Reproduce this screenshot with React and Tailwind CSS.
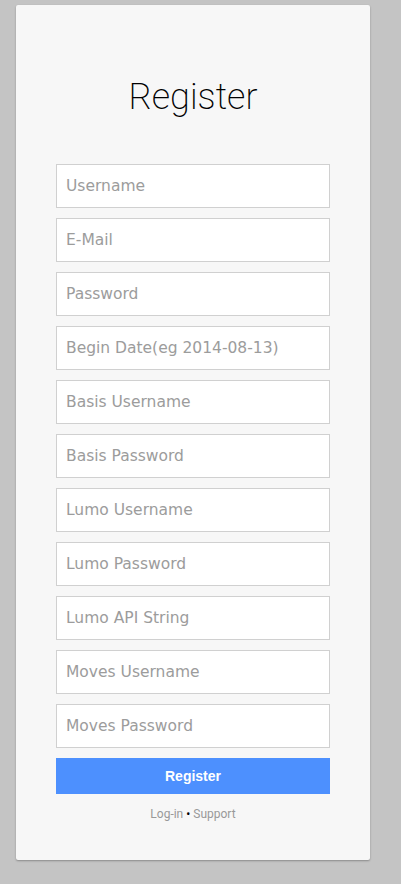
import React from "react";

const fields = [
  "Username",
  "E-Mail",
  "Password",
  "Begin Date(eg 2014-08-13)",
  "Basis Username",
  "Basis Password",
  "Lumo Username",
  "Lumo Password",
  "Lumo API String",
  "Moves Username",
  "Moves Password",
];

export default function App() {
  return (
    <div className="min-h-[884px] w-[401px] bg-[#c4c4c4] pt-[5px] pl-[16px]">
      <div className="w-[354px] h-[855px] bg-[#f7f7f7] rounded-[2px] shadow-[0_1px_2px_rgba(0,0,0,0.3)] flex flex-col items-center">
        <h1
          className="mt-[70px] text-[36px] leading-[44px] font-extralight text-black"
          style={{ fontFamily: "Roboto, sans-serif" }}
        >
          Register
        </h1>
        <form className="mt-[45px] w-[274px] flex flex-col gap-[10px]">
          {fields.map((f) => (
            <input
              key={f}
              type="text"
              placeholder={f}
              className="w-full h-[44px] bg-white border border-[#d0d0d0] px-[9px] text-[15.5px] placeholder:text-[#9c9c9c] outline-none"
              style={{ fontFamily: "'DejaVu Sans', sans-serif" }}
            />
          ))}
          <button
            type="button"
            className="w-full h-[36px] bg-[#4d90fe] text-white text-[14px] font-bold"
            style={{ fontFamily: "'Liberation Sans', Arial, sans-serif" }}
          >
            Register
          </button>
        </form>
        <div
          className="mt-[11px] text-[12px] text-[#999999]"
          style={{ fontFamily: "Roboto, sans-serif" }}
        >
          <a>Log-in</a> <span className="text-black">•</span> <a>Support</a>
        </div>
      </div>
    </div>
  );
}
